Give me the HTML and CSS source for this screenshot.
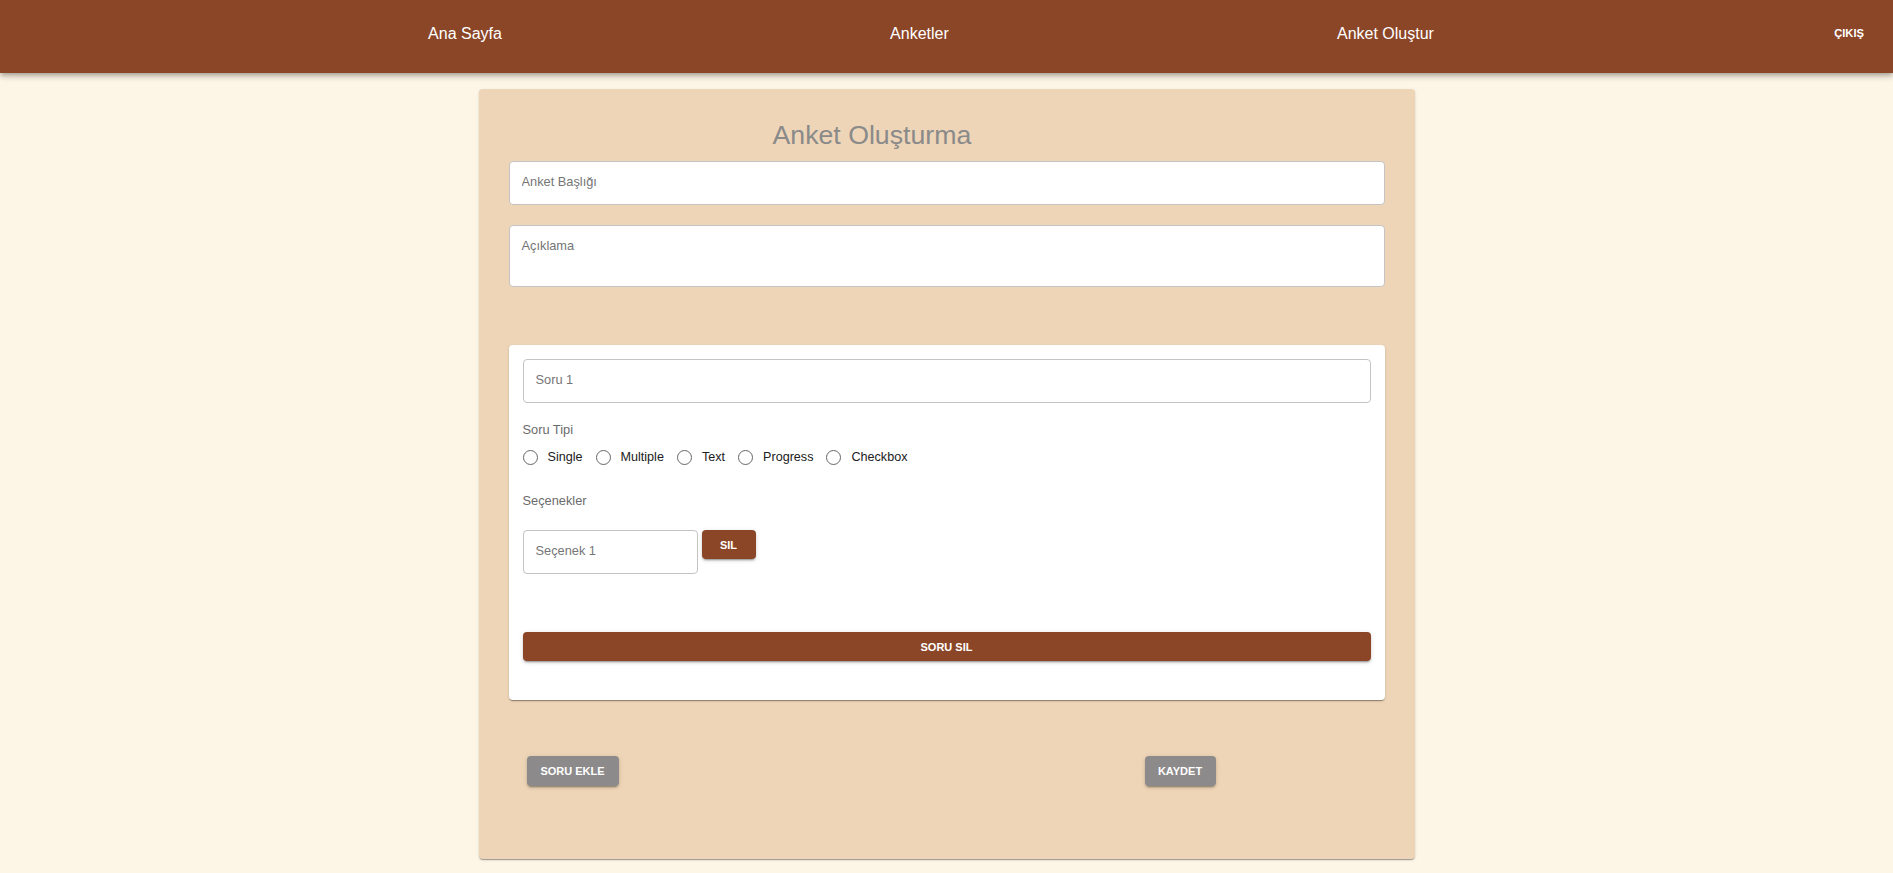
FILE: index.html
```html
<!DOCTYPE html>
<html lang="tr">
<head>
<meta charset="utf-8">
<title>Anket Oluşturma</title>
<link rel="stylesheet" href="styles.css">
</head>
<body>
<header class="nav">
  <div class="nav-links">
    <a class="nav-link" href="#">Ana Sayfa</a>
    <a class="nav-link" href="#">Anketler</a>
    <a class="nav-link" href="#">Anket Oluştur</a>
  </div>
  <a class="logout" href="#">ÇIKIŞ</a>
</header>

<main class="panel">
  <h1 class="title">Anket Oluşturma</h1>
  <input class="field" type="text" placeholder="Anket Başlığı">
  <textarea class="field area" placeholder="Açıklama"></textarea>

  <section class="card">
    <input class="field" type="text" placeholder="Soru 1">
    <div class="label first">Soru Tipi</div>
    <div class="radios">
      <label class="radio"><span class="circle"></span><span>Single</span></label>
      <label class="radio"><span class="circle"></span><span>Multiple</span></label>
      <label class="radio"><span class="circle"></span><span>Text</span></label>
      <label class="radio"><span class="circle"></span><span>Progress</span></label>
      <label class="radio"><span class="circle"></span><span>Checkbox</span></label>
    </div>
    <div class="label second">Seçenekler</div>
    <div class="option-row">
      <input class="field option" type="text" placeholder="Seçenek 1">
      <button class="btn brown small">SIL</button>
    </div>
    <button class="btn brown wide">SORU SIL</button>
  </section>

  <div class="actions">
    <button class="btn grey add">SORU EKLE</button>
    <button class="btn grey save">KAYDET</button>
  </div>
</main>
</body>
</html>
```

FILE: styles.css
```css
* { box-sizing: border-box; }

body {
  margin: 0;
  background: #fdf5e6;
  font-family: "Liberation Sans", Arial, sans-serif;
  height: 873px;
  overflow: hidden;
}

.nav {
  height: 73px;
  background: #8b4627;
  display: flex;
  align-items: flex-start;
  box-shadow: 0 2px 4px -1px rgba(0,0,0,.2), 0 4px 5px 0 rgba(0,0,0,.14), 0 1px 10px 0 rgba(0,0,0,.12);
  position: relative;
  z-index: 1;
}

.nav-links {
  width: 1394px;
  margin-left: 234px;
  display: flex;
  justify-content: space-around;
  padding-top: 25px;
}

.nav-link {
  color: #fff;
  text-decoration: none;
  font-size: 16px;
  line-height: 18px;
}

.logout {
  margin-left: auto;
  margin-right: 29px;
  padding-top: 27px;
  color: #fff;
  text-decoration: none;
  font-size: 11.2px;
  font-weight: bold;
  line-height: 13px;
}

.panel {
  width: 936px;
  margin: 16px auto 0;
  background: #eed5b7;
  border-radius: 4px;
  padding: 31px 30px 73px;
  box-shadow: 0 2px 1px -1px rgba(0,0,0,.2), 0 1px 1px 0 rgba(0,0,0,.14), 0 1px 3px 0 rgba(0,0,0,.12);
}

.title {
  margin: 0;
  padding-left: 264px;
  font-size: 26.7px;
  line-height: 30px;
  font-weight: normal;
  color: #8a8a8a;
}

.field {
  display: block;
  width: 100%;
  height: 44px;
  margin: 11px 0 0;
  padding: 0 12px 3px;
  border: 1px solid #c4c4c4;
  border-radius: 4px;
  background: #fff;
  font-family: inherit;
  font-size: 12.8px;
  color: #333;
  outline: none;
}

.field::placeholder { color: #757575; opacity: 1; }

.area {
  height: 62px;
  margin-top: 20px;
  padding: 12px 12px;
  line-height: 16px;
  resize: none;
}

.card {
  margin-top: 58px;
  background: #fff;
  border-radius: 4px;
  padding: 14px 14px 39px;
  box-shadow: 0 2px 1px -1px rgba(0,0,0,.25), 0 1px 1px 0 rgba(0,0,0,.14), 0 1px 3px 0 rgba(0,0,0,.12);
}

.card > .field:first-child { margin-top: 0; }

.label {
  font-size: 12.8px;
  line-height: 15px;
  color: #6b6b6b;
}

.label.first { margin-top: 19px; }
.label.second { margin-top: 26px; }

.radios {
  margin-top: 10px;
  height: 20px;
  display: flex;
  align-items: center;
  gap: 13px;
}

.radio {
  display: flex;
  align-items: center;
  gap: 10px;
  font-size: 12.6px;
  color: #212121;
}

.circle {
  width: 15px;
  height: 15px;
  border: 1.6px solid #666;
  border-radius: 50%;
  flex: none;
}

.option-row {
  margin-top: 22px;
  display: flex;
  align-items: flex-start;
  gap: 4px;
}

.field.option {
  width: 175px;
  margin: 0;
}

.btn {
  border: none;
  border-radius: 4px;
  color: #fff;
  font-family: inherit;
  font-weight: bold;
  font-size: 11px;
  padding: 0;
  cursor: pointer;
  box-shadow: 0 3px 1px -2px rgba(0,0,0,.2), 0 2px 2px 0 rgba(0,0,0,.14), 0 1px 5px 0 rgba(0,0,0,.12);
}

.brown { background: #8b4627; }
.grey { background: #8c8a8a; }

.small { width: 54px; height: 29px; }

.wide {
  display: block;
  width: 100%;
  height: 29px;
  margin-top: 58px;
}

.actions {
  margin-top: 56px;
  padding-left: 18px;
  display: flex;
  align-items: center;
}

.add { width: 92px; height: 30px; }
.save { width: 71px; height: 30px; margin-left: 526px; }
```
